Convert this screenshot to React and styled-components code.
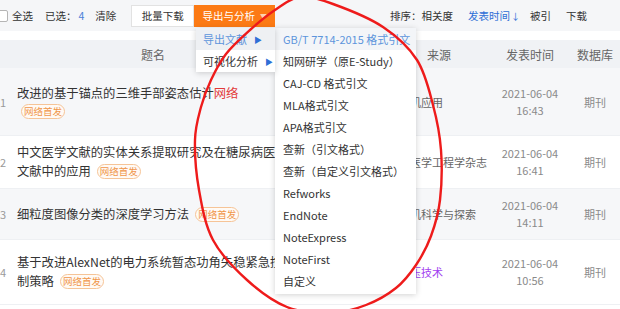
import React from "react";
import styled, { createGlobalStyle } from "styled-components";

const GlobalStyle = createGlobalStyle`
  body {
    margin: 0;
    background: #fff;
    font-family: "Noto Sans CJK SC", "Noto Sans", sans-serif;
  }
`;

const Page = styled.div`
  position: relative;
  width: 620px;
  height: 309px;
  overflow: hidden;
  color: #333;
`;

const Toolbar = styled.div`
  height: 31px;
  background: #f5f6f8;
  display: flex;
  align-items: center;
  font-size: 10.5px;
  color: #333;
`;

const Check = styled.span`
  width: 12px;
  height: 12px;
  box-sizing: border-box;
  border: 1px solid #b5b5b5;
  border-radius: 2px;
  background: #fff;
  margin-left: -4px;
  margin-right: 4px;
`;

const ToolText = styled.span`
  margin-left: ${(p) => p.$gap || 0}px;
  color: ${(p) => (p.$blue ? "#2f6fd6" : "#333")};
`;

const Count = styled.span`
  color: #4a80d8;
  margin-left: 2px;
`;

const ButtonGroup = styled.div`
  display: flex;
  margin-left: 15px;
  height: 22px;
`;

const ToolButton = styled.div`
  height: 22px;
  width: ${(p) => p.$w}px;
  box-sizing: border-box;
  display: flex;
  align-items: center;
  justify-content: center;
  font-size: 10.5px;
  background: ${(p) => (p.$primary ? "#fc7a14" : "#fff")};
  color: ${(p) => (p.$primary ? "#fff" : "#333")};
  border: 1px solid ${(p) => (p.$primary ? "#fc7a14" : "#e2e2e2")};
`;

const Caret = styled.span`
  font-size: 7px;
  color: #ffd2ae;
  margin-left: 5px;
`;

const SortBar = styled.div`
  margin-left: auto;
  margin-right: 33px;
  display: flex;
  align-items: center;
`;

const Arrow = styled.span`
  color: #2f6fd6;
  font-size: 9px;
  margin-left: 1px;
`;

const cols = "17px 272px 99px 102px 80px 50px";

const Header = styled.div`
  margin-top: 9px;
  height: 28px;
  background: #f0f2f5;
  display: grid;
  grid-template-columns: ${cols};
  align-items: center;
  font-size: 12px;
  color: #666;
`;

const HeadCell = styled.div`
  text-align: center;
`;

const Row = styled.div`
  height: ${(p) => p.$h}px;
  box-sizing: border-box;
  background: ${(p) => (p.$shade ? "#f6f7f9" : "#fff")};
  border-bottom: 1px solid #eef0f3;
  display: grid;
  grid-template-columns: ${cols};
  align-items: center;
`;

const Num = styled.div`
  font-size: 11px;
  color: #9a9a9a;
  text-align: right;
  padding-right: 13px;
`;

const Title = styled.div`
  font-size: 12.3px;
  line-height: 19px;
  color: #333;
`;

const Hit = styled.span`
  color: #e23a3a;
`;

const Tag = styled.span`
  display: ${(p) => (p.$newline ? "table" : "inline-block")};
  margin-left: ${(p) => (p.$newline ? 4 : 6)}px;
  margin-top: ${(p) => (p.$newline ? 1 : 0)}px;
  font-size: 9.5px;
  line-height: 13px;
  padding: 0 2px;
  border: 1px solid #f6c497;
  border-radius: 8px;
  color: #f0964a;
  background: #fffaf5;
  vertical-align: 1px;
`;

/* author column sits under the open dropdown, so it stays empty here */
const Author = styled.div``;

const Source = styled.div`
  font-size: 11px;
  color: ${(p) => (p.$visited ? "#a23ef0" : "#666")};
  white-space: nowrap;
`;

const DateCell = styled.div`
  font-size: 11px;
  line-height: 17px;
  color: #8a8a8a;
  text-align: center;
`;

const DbCell = styled.div`
  font-size: 11px;
  color: #8a8a8a;
  text-align: center;
`;

const Menu = styled.div`
  position: absolute;
  top: 28px;
  left: ${(p) => p.$left}px;
  width: ${(p) => p.$w}px;
  background: #fff;
  box-shadow: 0 1px 6px rgba(0, 0, 0, 0.18);
  padding-bottom: ${(p) => p.$pb || 0}px;
  z-index: ${(p) => p.$z};
`;

const MenuItem = styled.div`
  height: 22px;
  display: flex;
  align-items: center;
  padding-left: ${(p) => p.$pl}px;
  font-size: 11px;
  white-space: nowrap;
  color: ${(p) => (p.$active ? "#5d95dc" : "#333")};
  background: ${(p) => (p.$active ? p.$activeBg : "transparent")};
`;

const SubArrow = styled.span`
  color: #2f6fd6;
  font-size: 8px;
  margin-left: 7px;
`;

const Annotation = styled.svg`
  position: absolute;
  left: 0;
  top: 0;
  z-index: 10;
  pointer-events: none;
`;

const rows = [
  {
    n: 1,
    h: 68,
    shade: true,
    title: (
      <>
        改进的基于锚点的三维手部姿态估计<Hit>网络</Hit>
      </>
    ),
    newline: true,
    source: "计算机应用",
    date: "2021-06-04",
    time: "16:43",
  },
  {
    n: 2,
    h: 53,
    title: "中文医学文献的实体关系提取研究及在糖尿病医学文献中的应用",
    source: "生物医学工程学杂志",
    date: "2021-06-04",
    time: "16:41",
  },
  {
    n: 3,
    h: 51,
    shade: true,
    title: "细粒度图像分类的深度学习方法",
    source: "计算机科学与探索",
    date: "2021-06-04",
    time: "14:11",
  },
  {
    n: 4,
    h: 65,
    title: "基于改进AlexNet的电力系统暂态功角失稳紧急控制策略",
    source: "高电压技术",
    visited: true,
    date: "2021-06-04",
    time: "10:56",
  },
];

const formats = [
  "GB/T 7714-2015 格式引文",
  "知网研学（原E-Study）",
  "CAJ-CD 格式引文",
  "MLA格式引文",
  "APA格式引文",
  "查新（引文格式）",
  "查新（自定义引文格式）",
  "Refworks",
  "EndNote",
  "NoteExpress",
  "NoteFirst",
  "自定义",
];

// hand drawn circle, traced from the screenshot
const loop = [
  [300, -3], [333, 4], [383, 27], [417, 60], [433, 105], [441, 150],
  [440, 200], [431, 236], [416, 265], [396, 288], [366, 305], [330, 313],
  [287, 307], [247, 280], [213, 240], [199, 190], [195, 140], [201, 107],
  [211, 80], [226, 54], [250, 30], [275, 10],
];

function smoothPath(p) {
  const n = p.length;
  let d = `M${p[0][0]},${p[0][1]}`;
  for (let i = 0; i < n; i++) {
    const p0 = p[(i - 1 + n) % n];
    const p1 = p[i];
    const p2 = p[(i + 1) % n];
    const p3 = p[(i + 2) % n];
    const c1x = p1[0] + (p2[0] - p0[0]) / 6;
    const c1y = p1[1] + (p2[1] - p0[1]) / 6;
    const c2x = p2[0] - (p3[0] - p1[0]) / 6;
    const c2y = p2[1] - (p3[1] - p1[1]) / 6;
    d += ` C${c1x},${c1y} ${c2x},${c2y} ${p2[0]},${p2[1]}`;
  }
  return d + "Z";
}

const App = () => {
  return (
    <Page>
      <GlobalStyle />
      <Toolbar>
        <Check />
        <ToolText>全选</ToolText>
        <ToolText $gap={12}>
          已选：<Count>4</Count>
        </ToolText>
        <ToolText $gap={11}>清除</ToolText>
        <ButtonGroup>
          <ToolButton $w={63}>批量下载</ToolButton>
          <ToolButton $w={81} $primary>
            导出与分析<Caret>▼</Caret>
          </ToolButton>
        </ButtonGroup>
        <SortBar>
          <ToolText>排序：相关度</ToolText>
          <ToolText $gap={15} $blue>
            发表时间<Arrow>↓</Arrow>
          </ToolText>
          <ToolText $gap={10}>被引</ToolText>
          <ToolText $gap={15}>下载</ToolText>
        </SortBar>
      </Toolbar>

      <Header>
        <HeadCell />
        <HeadCell>题名</HeadCell>
        <HeadCell />
        <HeadCell>来源</HeadCell>
        <HeadCell>发表时间</HeadCell>
        <HeadCell>数据库</HeadCell>
      </Header>

      {rows.map((r) => (
        <Row key={r.n} $h={r.h} $shade={r.shade}>
          <Num>{r.n}</Num>
          <Title>
            {r.title}
            <Tag $newline={r.newline}>网络首发</Tag>
          </Title>
          <Author />
          <Source $visited={r.visited}>{r.source}</Source>
          <DateCell>
            {r.date}
            <br />
            {r.time}
          </DateCell>
          <DbCell>期刊</DbCell>
        </Row>
      ))}

      <Menu $left={196} $w={79} $z={3}>
        <MenuItem $pl={7} $active $activeBg="#eef0f3">
          导出文献<SubArrow>▶</SubArrow>
        </MenuItem>
        <MenuItem $pl={7}>
          可视化分析<SubArrow>▶</SubArrow>
        </MenuItem>
      </Menu>

      <Menu $left={275} $w={141} $z={2} $pb={2}>
        {formats.map((f, i) => (
          <MenuItem key={f} $pl={8} $active={i === 0} $activeBg="#f3f5f8">
            {f}
          </MenuItem>
        ))}
      </Menu>

      <Annotation width="620" height="309" viewBox="0 0 620 309">
        <path d={smoothPath(loop)} fill="none" stroke="#ee1b1b" strokeWidth="2.4" />
      </Annotation>
    </Page>
  );
};

export default App;
